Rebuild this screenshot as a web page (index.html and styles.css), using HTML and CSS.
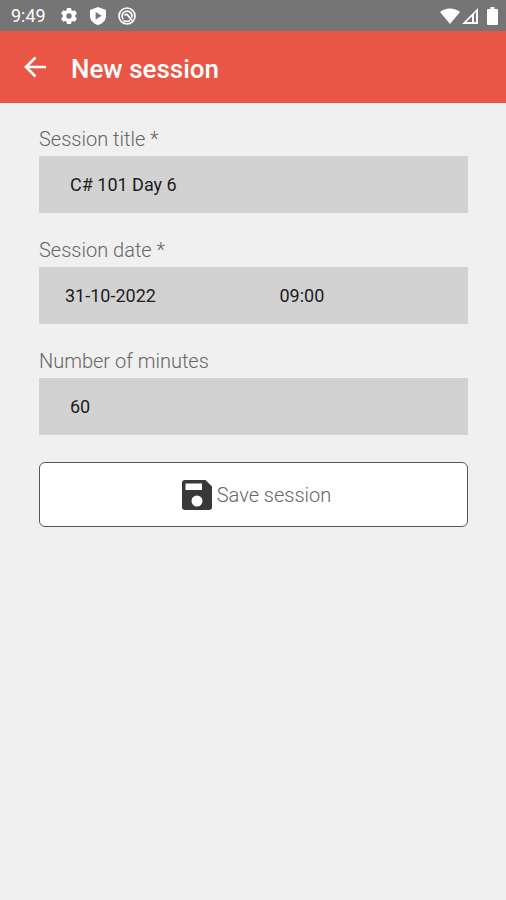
FILE: index.html
```html
<!DOCTYPE html>
<html lang="en">
<head>
<meta charset="utf-8">
<meta name="viewport" content="width=device-width, initial-scale=1">
<title>New session</title>
<link rel="stylesheet" href="styles.css">
</head>
<body>
<div class="status-bar">
  <span class="clock">9:49</span>
  <div class="status-icons notifications">
    <svg class="icon" viewBox="0 0 18 18" aria-hidden="true">
      <path fill="currentColor" fill-rule="evenodd" d="M7 1h4l.5 2.3 1.2.7 2.2-.8 2 3.4L15.200 8.200v1.600l1.700 1.600-2 3.400-2.200-.8-1.200.7L11 17H7l-.5-2.300-1.200-.7-2.200.8-2-3.400L2.800 9.800V8.200L1.100 6.600l2-3.400 2.200.8 1.200-.7zM9 6.300a2.700 2.700 0 1 0 0 5.400 2.700 2.700 0 0 0 0-5.400z"/>
    </svg>
    <svg class="icon" viewBox="0 0 18 18" aria-hidden="true">
      <path fill="currentColor" fill-rule="evenodd" d="M9 0l8 3v6c0 4.300-3.300 7.700-8 9-4.700-1.300-8-4.700-8-9V3zM6.600 5v7.400L12.600 8.700z"/>
    </svg>
    <svg class="icon" viewBox="0 0 18 18" aria-hidden="true">
      <g fill="none" stroke="currentColor" stroke-width="1.700">
        <circle cx="9" cy="9" r="8"/>
        <path d="M5.200 12.400A5 5 0 1 1 13.800 10.500M5.500 13.500c2 1.200 4.500 1.200 6.500 0"/>
        <path stroke-width="2" d="M6.500 8.500q2-2.500 3.500 0l4 5"/>
      </g>
    </svg>
  </div>
  <div class="status-icons system">
    <svg class="wifi" viewBox="0 0 20 16" aria-hidden="true">
      <path fill="currentColor" d="M0 4C5.500-.8 14.500-.8 20 4L10 16z"/>
    </svg>
    <svg class="signal" viewBox="0 0 16 16" aria-hidden="true">
      <path fill="currentColor" fill-rule="evenodd" d="M16 0v16H0zM10 8.500L4.200 14H10zM12 6v8h2V4z"/>
    </svg>
    <svg class="battery" viewBox="0 0 11 18" aria-hidden="true">
      <path fill="currentColor" d="M3.500 0h4v2H10q1 0 1 1v14q0 1-1 1H1q-1 0-1-1V3q0-1 1-1h2.500z"/>
    </svg>
  </div>
</div>

<header class="app-bar">
  <button class="back" type="button" aria-label="Back">
    <svg viewBox="0 0 22 22" aria-hidden="true">
      <path fill="none" stroke="currentColor" stroke-width="2.600" d="M11.500 1.500L2 11l9.500 9.500M2 11h20"/>
    </svg>
  </button>
  <h1 class="title">New session</h1>
</header>

<main>
  <form class="session-form">
    <div class="field">
      <label for="session-title">Session title *</label>
      <input class="box" id="session-title" type="text" value="C# 101 Day 6">
    </div>
    <div class="field">
      <label for="session-date">Session date *</label>
      <div class="box date-row">
        <input id="session-date" type="text" value="31-10-2022">
        <input type="text" value="09:00" aria-label="Session time">
      </div>
    </div>
    <div class="field">
      <label for="session-minutes">Number of minutes</label>
      <input class="box" id="session-minutes" type="text" inputmode="numeric" value="60">
    </div>
    <button class="save" type="button">
      <svg viewBox="0 0 30 30" aria-hidden="true">
        <path fill="currentColor" fill-rule="evenodd" d="M3 0h20.500L30 6.500V27q0 3-3 3H3q-3 0-3-3V3q0-3 3-3zM3.500 3.500V10H20V3.500zM15 15.500a5.500 5.500 0 1 0 0 11 5.500 5.500 0 0 0 0-11z"/>
      </svg>
      <span>Save session</span>
    </button>
  </form>
</main>
</body>
</html>
```
FILE: styles.css
```css
* {
  box-sizing: border-box;
}

body {
  margin: 0;
  min-height: 100vh;
  background: #f0f0f0;
  color: #666;
  font-family: Roboto, "Liberation Sans", sans-serif;
  font-size: 20px;
  line-height: 24px;
}

input,
button {
  margin: 0;
  border: 0;
  background: none;
  color: inherit;
  font: inherit;
}

svg {
  display: block;
}

.status-bar {
  display: flex;
  align-items: center;
  height: 31px;
  padding: 1px 8px 0 11px;
  background: #757575;
  color: #fff;
}

.clock {
  font-size: 18px;
}

.status-icons {
  display: flex;
  align-items: center;
}

.notifications {
  gap: 11px;
  margin-left: 14px;
}

.system {
  gap: 2px;
  margin-left: auto;
}

.icon {
  width: 18px;
  height: 18px;
}

.wifi {
  width: 20px;
  height: 16px;
}

.signal {
  width: 16px;
  height: 16px;
}

.battery {
  width: 11px;
  height: 18px;
  margin-left: 7px;
}

.app-bar {
  display: flex;
  align-items: center;
  gap: 25px;
  height: 72px;
  padding: 0 24px;
  background: #e95646;
  color: #fff;
}

.back {
  padding: 0;
}

.back svg {
  width: 22px;
  height: 22px;
}

.title {
  margin: 0;
  padding-top: 4px;
  font-size: 26px;
  font-weight: 500;
  line-height: 32px;
}

.session-form {
  display: flex;
  flex-direction: column;
  gap: 25px;
  padding: 24px 38px 24px 39px;
}

.field {
  display: flex;
  flex-direction: column;
  gap: 5px;
}

.field label,
.save {
  font-weight: 300;
}

.box {
  width: 100%;
  height: 57px;
  padding: 0 31px;
  background: #d2d2d2;
  color: #1c1c1c;
  font-size: 18px;
}

.date-row {
  display: grid;
  grid-template-columns: 1fr 1fr;
  padding: 0;
}

.date-row input {
  min-width: 0;
  padding: 0 26px;
}

.save {
  display: flex;
  align-items: center;
  justify-content: center;
  gap: 5px;
  height: 65px;
  margin-top: 2px;
  padding: 0 0 0 6px;
  border: 1px solid #555;
  border-radius: 6px;
  background: #fff;
}

.save svg {
  width: 30px;
  height: 30px;
  color: #383838;
}
```
